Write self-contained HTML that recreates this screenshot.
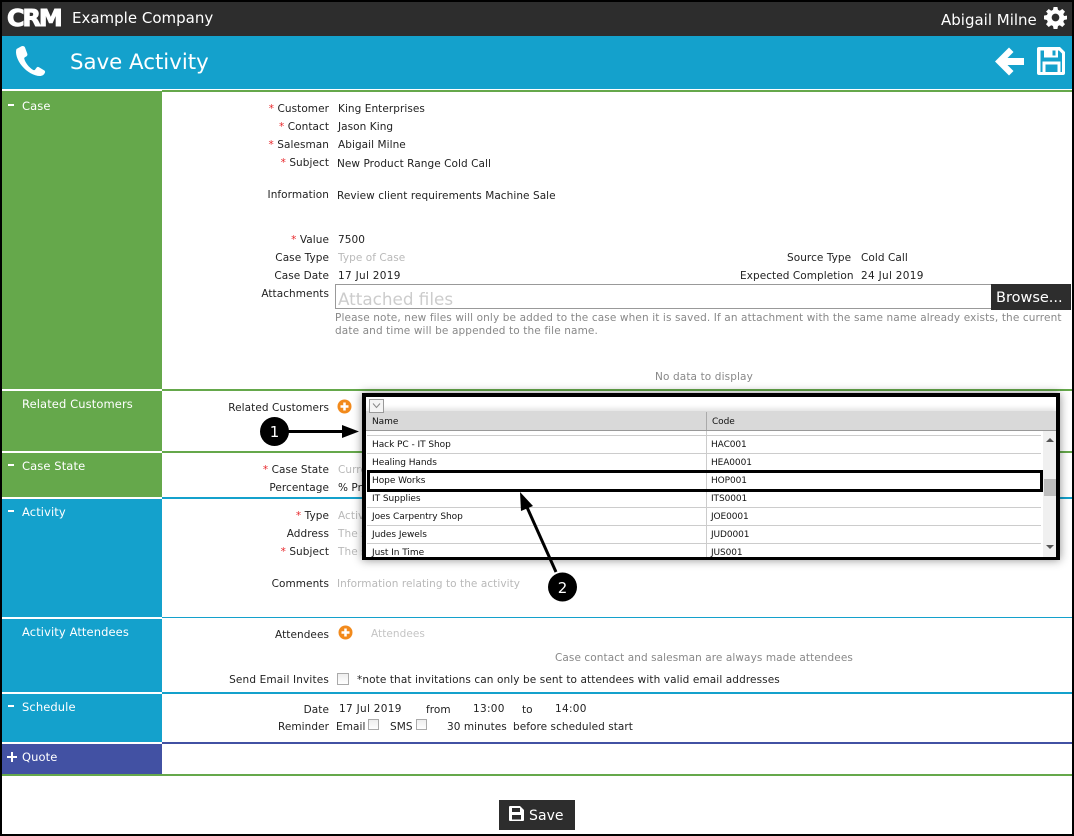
<!DOCTYPE html>
<html><head><meta charset="utf-8"><style>
html,body{margin:0;padding:0;background:#fff}
#p{position:relative;width:1074px;height:836px;overflow:hidden;background:#fff;font:10.5px/14px "DejaVu Sans","Liberation Sans",sans-serif;letter-spacing:.06px;color:#222}
#p div,#p span.a{position:absolute;white-space:nowrap}
.l{right:745px;text-align:right;margin-top:1px}
.v{left:337px;margin-top:1px}
.g{color:#b9b9b9}
.n{color:#888;margin-top:1px;letter-spacing:.12px}
.d{letter-spacing:.3px}
i{font-style:normal;color:#e8262a}
.s{color:#fff;font-size:11.5px;left:22px;letter-spacing:.1px}
.m{background:#fff;left:8px;width:6px;height:2px}
.c{width:10px;height:10px;border:1px solid #aaa;background:linear-gradient(#eee,#fff);box-sizing:content-box}
.r{left:367px;width:674px;height:1px;background:#ccc}
.t{font-size:9px;letter-spacing:-.05px;color:#111;left:372px;margin-top:2px}
.u{font-size:9px;letter-spacing:-.1px;color:#111;left:711px;margin-top:2px}
</style></head><body><div id="p">
<div style="left:0;top:0;width:1074px;height:36px;background:#2d2d2d"></div>
<div style="left:2px;top:36px;width:1070px;height:53px;background:#14a1cc"></div>

<div style="left:2px;top:91px;width:160px;height:298px;background:#65a84b"></div>
<div style="left:2px;top:391px;width:160px;height:60px;background:#65a84b"></div>
<div style="left:2px;top:453px;width:160px;height:44px;background:#65a84b"></div>
<div style="left:2px;top:499px;width:160px;height:118px;background:#14a1cc"></div>
<div style="left:2px;top:619px;width:160px;height:73px;background:#14a1cc"></div>
<div style="left:2px;top:694px;width:160px;height:48px;background:#14a1cc"></div>
<div style="left:2px;top:744px;width:160px;height:30px;background:#4251a3"></div>

<div style="left:162px;top:90px;width:910px;height:1.5px;background:#65a84b"></div>
<div style="left:162px;top:389px;width:910px;height:2px;background:#65a84b"></div>
<div style="left:162px;top:451px;width:910px;height:2px;background:#65a84b"></div>
<div style="left:162px;top:497px;width:910px;height:2px;background:#14a1cc"></div>
<div style="left:162px;top:617px;width:910px;height:1px;background:#14a1cc"></div>
<div style="left:162px;top:692px;width:910px;height:2px;background:#14a1cc"></div>
<div style="left:162px;top:742px;width:910px;height:2px;background:#4251a3"></div>
<div style="left:2px;top:774px;width:1070px;height:2px;background:#65a84b"></div>

<div style="left:0;top:0;width:2px;height:836px;background:#000"></div>
<div style="left:1072px;top:0;width:2px;height:836px;background:#000"></div>
<div style="left:0;top:0;width:1074px;height:2px;background:#000"></div>
<div style="left:0;top:834px;width:1074px;height:2px;background:#000"></div>

<div style="left:7px;top:7px;color:#fff;font:bold 23px/24px 'DejaVu Sans',sans-serif;transform-origin:0 50%;transform:scaleX(1.04);letter-spacing:-2px;-webkit-text-stroke:1px #fff">CRM</div>
<div style="left:72px;top:9px;color:#fff;font-size:15px;line-height:18px;letter-spacing:0">Example Company</div>
<div style="left:941px;top:11px;color:#fff;font-size:15px;line-height:18px;letter-spacing:0">Abigail Milne</div>
<svg style="position:absolute;left:1044px;top:6px" width="23" height="23" viewBox="0 0 24 24"><path fill="#fff" fill-rule="evenodd" d="M10 1h4l.6 3.1 1.9.8L19.100 3.100l2.800 2.800-1.800 2.600.8 1.900L24 10v4l-3.100.6-.8 1.900 1.800 2.600-2.800 2.800-2.600-1.800-1.900.8L14 24h-4l-.6-3.100-1.900-.8-2.600 1.800-2.800-2.800 1.800-2.600-.8-1.900L0 14v-4l3.100-.6.8-1.900L2.100 5.900l2.800-2.800 2.600 1.800 1.900-.8zM12 8a4 4 0 1 0 0 8 4 4 0 0 0 0-8z"/></svg>

<svg style="position:absolute;left:14px;top:45px" width="32" height="32" viewBox="0 0 32 32"><path fill="#fff" d="M7 1.500 2.500 4C1 8 3 15 8 21s12 10 18 10c2 0 4-1 5-3.500.4-1-.2-1.800-1-2.300l-5-3c-1-.5-1.800-.3-2.500.5l-1.500 2c-.5.600-1.200.6-2 .2-2-1.200-4-3-5.500-5s-2.700-4-3.200-6c-.2-.7 0-1.300.6-1.700l1.700-1c.8-.6 1-1.400.7-2.400L11 2.500C10.500 1 8.500.6 7 1.500z"/></svg>
<div style="left:70px;top:49px;color:#fff;font-size:21.300px;line-height:28px;letter-spacing:0">Save Activity</div>
<svg style="position:absolute;left:994px;top:46px" width="31" height="31" viewBox="0 0 31 31"><path fill="#fff" d="M1 15.500 15 1.500l4.500 4.500-6 6H30v7H13.500l6 6-4.500 4.500z"/></svg>
<svg style="position:absolute;left:1037px;top:46px" width="29" height="30" viewBox="0 0 29 30"><path fill="#fff" fill-rule="evenodd" d="M2 1h21l5 5v21a2 2 0 0 1-2 2H2a2 2 0 0 1-2-2V3a2 2 0 0 1 2-2zM3.500 4.500V26h2V15.500h18V26H25V7.500l-3-3H21V11.500H7V4.500zM8.500 18.500v7.500h12v-7.500zM15.500 4.500v5h3v-5z"/></svg>

<div class="m" style="top:104px"></div>
<div class="s" style="top:99px">Case</div>
<div class="s" style="top:397px">Related Customers</div>
<div class="m" style="top:464px"></div>
<div class="s" style="top:459px">Case State</div>
<div class="m" style="top:510px"></div>
<div class="s" style="top:505px">Activity</div>
<div class="s" style="top:625px">Activity Attendees</div>
<div class="m" style="top:705px"></div>
<div class="s" style="top:700px">Schedule</div>
<div style="left:11px;top:752px;width:1.500px;height:10px;background:#fff"></div><div style="left:7px;top:756px;width:10px;height:1.500px;background:#fff"></div>
<div class="s" style="top:750px">Quote</div>

<div class="l" style="top:101px"><i>*</i> Customer</div><div class="v" style="top:101px;left:338px">King Enterprises</div>
<div class="l" style="top:119px"><i>*</i> Contact</div><div class="v" style="top:119px;left:338px">Jason King</div>
<div class="l" style="top:137px"><i>*</i> Salesman</div><div class="v" style="top:137px;left:338px">Abigail Milne</div>
<div class="l" style="top:155px"><i>*</i> Subject</div><div class="v" style="top:156px">New Product Range Cold Call</div>
<div class="l" style="top:187px">Information</div><div class="v" style="top:188px">Review client requirements Machine Sale</div>
<div class="l" style="top:232px"><i>*</i> Value</div><div class="v" style="top:232px;left:338px">7500</div>
<div class="l" style="top:250px">Case Type</div><div class="v g" style="top:250px;left:338px">Type of Case</div>
<div class="l" style="top:268px">Case Date</div><div class="v d" style="top:268px;left:338px">17 Jul 2019</div>
<div class="l" style="top:286px">Attachments</div>
<div style="left:787px;top:251px">Source Type</div><div style="left:861px;top:251px">Cold Call</div>
<div style="left:740px;top:269px">Expected Completion</div><div class="d" style="left:861px;top:269px">24 Jul 2019</div>
<div style="left:335px;top:284px;width:657px;height:25px;border:1px solid #999;box-sizing:border-box"></div>
<div class="g" style="left:338px;top:288px;font-size:16.800px;line-height:22px;color:#ccc;letter-spacing:0">Attached files</div>
<div style="left:991px;top:284px;width:80px;height:26px;background:#2d2d2d;color:#fff;font-size:14.500px;line-height:28px;text-indent:5px;letter-spacing:0">Browse...</div>
<div class="n" style="left:335px;top:310px">Please note, new files will only be added to the case when it is saved. If an attachment with the same name already exists, the current</div>
<div class="n" style="left:335px;top:323px">date and time will be appended to the file name.</div>
<div class="n" style="left:655px;top:369px">No data to display</div>

<div class="l" style="top:400px">Related Customers</div>
<svg style="position:absolute;left:337px;top:399px" width="15" height="15" viewBox="0 0 15 15"><circle cx="7.500" cy="7.500" r="7" fill="#f28a1c"/><path d="M7.500 3.500v8M3.500 7.500h8" stroke="#fff" stroke-width="2.500"/></svg>
<div class="l" style="top:462px"><i>*</i> Case State</div><div class="v g" style="top:462px;left:338px">Current</div>
<div class="l" style="top:480px">Percentage</div><div class="v" style="top:480px;left:338px">% Prob</div>
<div class="l" style="top:508px"><i>*</i> Type</div><div class="v g" style="top:508px;left:338px">Activity</div>
<div class="l" style="top:526px">Address</div><div class="v g" style="top:526px;left:338px">The site</div>
<div class="l" style="top:544px"><i>*</i> Subject</div><div class="v g" style="top:544px;left:338px">The subject</div>
<div class="l" style="top:576px">Comments</div><div class="v g" style="top:576px;left:337px">Information relating to the activity</div>
<div class="l" style="top:627px">Attendees</div>
<svg style="position:absolute;left:338px;top:625px" width="15" height="15" viewBox="0 0 15 15"><circle cx="7.500" cy="7.500" r="7" fill="#f28a1c"/><path d="M7.500 3.500v8M3.500 7.500h8" stroke="#fff" stroke-width="2.500"/></svg>
<div class="g" style="left:371px;top:627px;color:#c4c4c4">Attendees</div>
<div class="n" style="left:555px;top:650px;letter-spacing:.08px">Case contact and salesman are always made attendees</div>
<div class="l" style="top:672px;letter-spacing:.15px">Send Email Invites</div>
<div class="c" style="left:337px;top:673px"></div>
<div style="left:357px;top:673px;letter-spacing:.1px">*note that invitations can only be sent to attendees with valid email addresses</div>

<div class="l" style="top:702px">Date</div><div class="d" style="left:339px;top:702px">17 Jul 2019</div>
<div style="left:426px;top:703px">from</div><div class="d" style="left:473px;top:702px">13:00</div><div style="left:522px;top:703px">to</div><div class="d" style="left:555px;top:702px">14:00</div>
<div class="l" style="top:719px">Reminder</div><div style="left:336px;top:719px;margin-top:1px">Email</div>
<div class="c" style="left:368px;top:719px;width:9px;height:9px"></div>
<div style="left:390px;top:720px">SMS</div>
<div class="c" style="left:416px;top:719px;width:9px;height:9px"></div>
<div style="left:447px;top:720px">30 minutes</div><div style="left:513px;top:720px">before scheduled start</div>

<div style="left:499px;top:800px;width:76px;height:30px;background:#2d2d2d"></div>
<svg style="position:absolute;left:509px;top:806px" width="15" height="15" viewBox="0 0 15 15"><path fill="#fff" fill-rule="evenodd" d="M1 0h10l4 4v10a1 1 0 0 1-1 1H1a1 1 0 0 1-1-1V1a1 1 0 0 1 1-1zM3 2v4h8V2zM3 9v4.500h9V9z"/></svg>
<div style="left:529px;top:805px;color:#fff;font-size:14px;line-height:20px;margin-top:1px">Save</div>

<!-- popup -->
<div style="left:362px;top:393px;width:698px;height:167px;background:#fff;box-shadow:0 0 9px rgba(0,0,0,.45)"></div>
<div style="left:366px;top:411px;width:690px;height:19px;background:#d9d9d9;box-shadow:0 -3px 4px rgba(0,0,0,.1);border-bottom:1px solid #999"></div>
<div style="left:369px;top:399px;width:13px;height:12px;background:#f4f4f4;border:1px solid #999"></div>
<svg style="position:absolute;left:372px;top:402px" width="9" height="7" viewBox="0 0 9 7"><path d="M1 1.500l3.500 4 3.500-4" fill="none" stroke="#888"/></svg>
<div class="t" style="top:413px">Name</div>
<div style="left:706px;top:412px;width:1px;height:18px;background:#aaa"></div>
<div class="u" style="top:413px;left:712px">Code</div>
<div class="r" style="top:435px"></div><div class="r" style="top:453px"></div><div class="r" style="top:471px"></div><div class="r" style="top:489px"></div><div class="r" style="top:507px"></div><div class="r" style="top:525px"></div><div class="r" style="top:543px"></div>
<div style="left:706px;top:431px;width:1px;height:126px;background:#ccc"></div>
<div class="t" style="top:436px">Hack PC - IT Shop</div><div class="u" style="top:436px">HAC001</div>
<div class="t" style="top:454px">Healing Hands</div><div class="u" style="top:454px">HEA0001</div>
<div class="t" style="top:472px">Hope Works</div><div class="u" style="top:472px">HOP001</div>
<div class="t" style="top:490px">IT Supplies</div><div class="u" style="top:490px">ITS0001</div>
<div class="t" style="top:508px">Joes Carpentry Shop</div><div class="u" style="top:508px">JOE0001</div>
<div class="t" style="top:526px">Judes Jewels</div><div class="u" style="top:526px">JUD0001</div>
<div class="t" style="top:544px">Just In Time</div><div class="u" style="top:544px">JUS001</div>
<div style="left:1043px;top:431px;width:13px;height:126px;background:#f0f0f0"></div>
<div style="left:1044px;top:479px;width:12px;height:17px;background:#bdbdbd"></div>
<svg style="position:absolute;left:1045px;top:436px" width="10" height="116" viewBox="0 0 10 116"><path fill="#555" d="M1 6l4-4 4 4zM1 109l4 4 4-4z"/></svg>
<div style="left:362px;top:393px;width:698px;height:167px;border:solid #000;border-width:4px 4px 3px 4px;box-sizing:border-box"></div>
<div style="left:367px;top:470px;width:676px;height:22px;border:3px solid #000;box-sizing:border-box"></div>

<svg style="position:absolute;left:0;top:0" width="1074" height="836">
<path d="M285 431.500H345" stroke="#000" stroke-width="3"/><path d="M342 425l17 6.500-17 6.500z"/>
<path d="M556 572 526 505" stroke="#000" stroke-width="3"/><path d="M520 492l13 14-12 5z"/>
<circle cx="274.500" cy="431.500" r="14.500"/><circle cx="562.500" cy="587" r="14.500"/>
<text x="274.500" y="437" font-family="'DejaVu Sans',sans-serif" font-size="15" fill="#fff" text-anchor="middle">1</text>
<text x="562.500" y="593" font-family="'DejaVu Sans',sans-serif" font-size="15" fill="#fff" text-anchor="middle">2</text>
</svg>
</div></body></html>
